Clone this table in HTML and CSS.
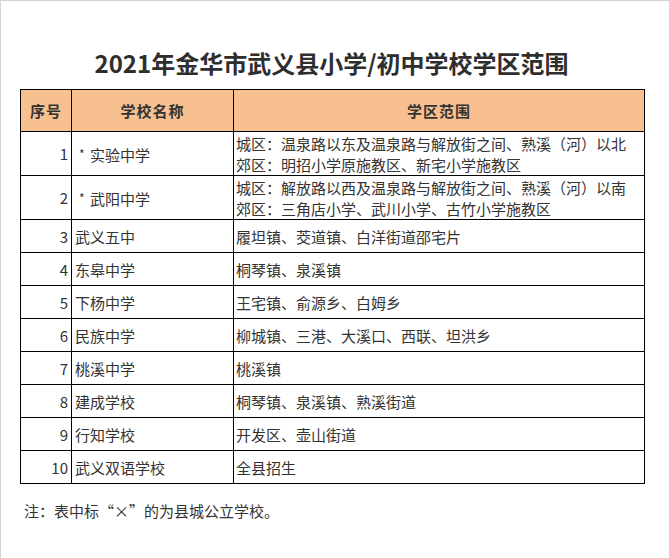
FILE: index.html
```html
<!DOCTYPE html>
<html lang="zh-CN">
<head>
<meta charset="utf-8">
<link rel="stylesheet" href="styles.css">
</head>
<body>
<div class="page">
  <h1 class="title">2021年金华市武义县小学/初中学校学区范围</h1>
  <table class="grid">
    <colgroup>
      <col class="c-num"><col class="c-name"><col class="c-area">
    </colgroup>
    <thead>
      <tr class="head"><th>序号</th><th>学校名称</th><th>学区范围</th></tr>
    </thead>
    <tbody>
      <tr class="tall"><td class="num">1</td><td class="name"><span class="star">*</span>实验中学</td><td class="area">城区：温泉路以东及温泉路与解放街之间、熟溪（河）以北<br>郊区：明招小学原施教区、新宅小学施教区</td></tr>
      <tr class="tall"><td class="num">2</td><td class="name"><span class="star">*</span>武阳中学</td><td class="area">城区：解放路以西及温泉路与解放街之间、熟溪（河）以南<br>郊区：三角店小学、武川小学、古竹小学施教区</td></tr>
      <tr><td class="num">3</td><td class="name">武义五中</td><td class="area">履坦镇、茭道镇、白洋街道邵宅片</td></tr>
      <tr><td class="num">4</td><td class="name">东皋中学</td><td class="area">桐琴镇、泉溪镇</td></tr>
      <tr><td class="num">5</td><td class="name">下杨中学</td><td class="area">王宅镇、俞源乡、白姆乡</td></tr>
      <tr><td class="num">6</td><td class="name">民族中学</td><td class="area">柳城镇、三港、大溪口、西联、坦洪乡</td></tr>
      <tr><td class="num">7</td><td class="name">桃溪中学</td><td class="area">桃溪镇</td></tr>
      <tr><td class="num">8</td><td class="name">建成学校</td><td class="area">桐琴镇、泉溪镇、熟溪街道</td></tr>
      <tr><td class="num">9</td><td class="name">行知学校</td><td class="area">开发区、壶山街道</td></tr>
      <tr><td class="num">10</td><td class="name">武义双语学校</td><td class="area">全县招生</td></tr>
    </tbody>
  </table>
  <p class="note">注：表中标“×”的为县城公立学校。</p>
</div>
</body>
</html>
```
FILE: styles.css
```css
html, body {
  margin: 0;
  padding: 0;
  background: #fff;
}
.page {
  box-sizing: border-box;
  width: 669px;
  height: 558px;
  border-left: 1px solid #d4d4d4;
  border-top: 1px solid #d4d4d4;
  padding: 0 0 0 19px;
  font-family: "Noto Sans CJK SC", "Noto Sans", sans-serif;
  color: #333;
  overflow: hidden;
}
.title {
  margin: 0;
  padding-top: 45px;
  width: 623px;
  height: 43px;
  line-height: 34px;
  font-size: 24px;
  font-weight: bold;
  text-align: center;
  color: #2e2e2e;
}
.grid {
  border-collapse: collapse;
  width: 624px;
  table-layout: fixed;
  font-size: 15px;
  color: #333;
}
.c-num { width: 51px; }
.c-name { width: 162px; }
.c-area { width: 411px; }
.grid th, .grid td {
  border: 1px solid #000;
  padding: 0;
  vertical-align: middle;
}
.head th {
  background: #f8c08f;
  height: 41px;
  font-weight: bold;
  text-align: center;
  letter-spacing: 1px;
}
.grid td {
  height: 32px;
  line-height: 21px;
}
.tall td {
  height: 43px;
}
.num {
  text-align: right;
  padding-right: 3px !important;
}
.name {
  padding-left: 3px !important;
}
.area {
  padding-left: 2px !important;
}
.star {
  display: inline-block;
  width: 11px;
  margin-left: 4px;
  font-size: 12px;
  vertical-align: 2px;
}
.note {
  margin: 17px 0 0 4px;
  font-size: 15px;
  line-height: 20px;
  color: #333;
}
```
